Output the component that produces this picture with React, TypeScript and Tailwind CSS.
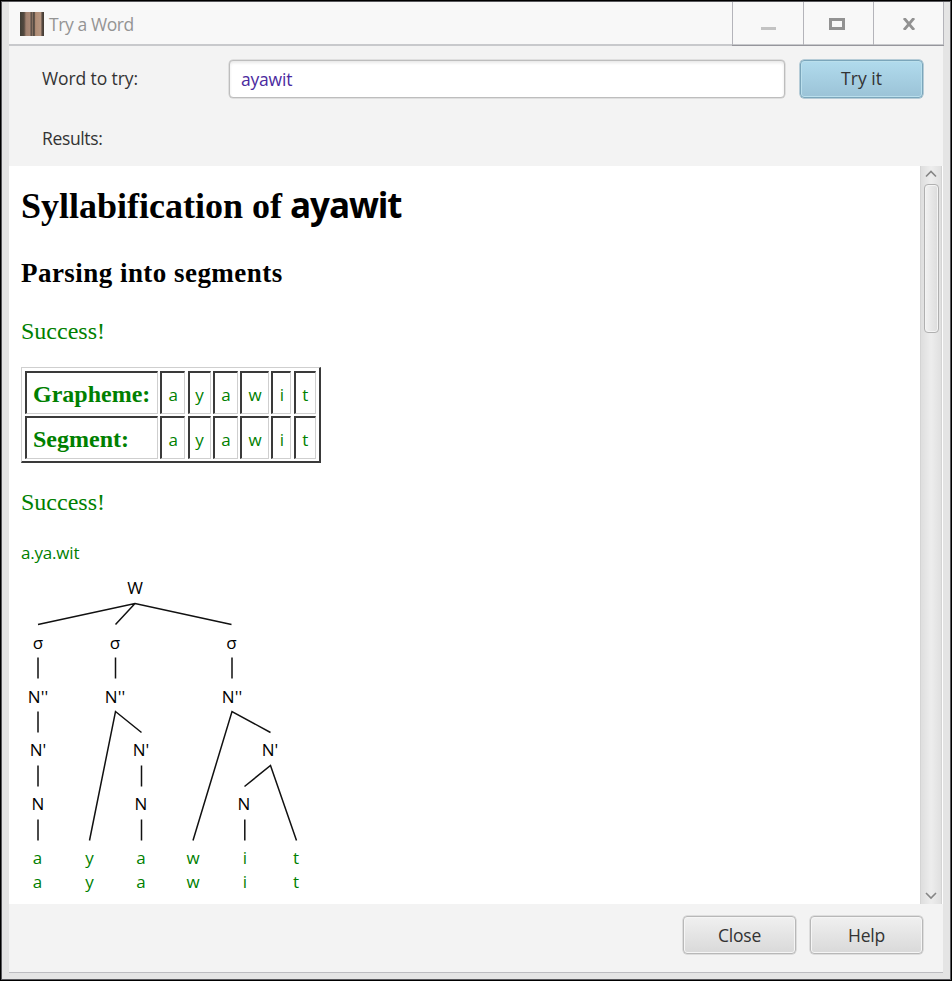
const LETTERS = ["a", "y", "a", "w", "i", "t"];
const ui = "font-['Open_Sans','Noto_Sans',sans-serif]";
const button =
  "h-[38px] w-[113px] rounded-[4px] border-[1.5px] border-[#b8b8b8] bg-linear-to-b from-[#f0f0f0] to-[#d9d9d9] pt-[1px] text-[17.5px] tracking-[-0.2px] text-[#333] shadow-[inset_0_0_0_1px_#f5f5f5,0_0_0_0.5px_#c8c8c8]";
const cell =
  "flex items-center justify-center border-t-2 border-l-2 border-r border-b border-t-[#3a3a3a] border-l-[#3a3a3a] border-r-[#cfcfcf] border-b-[#cfcfcf]";

function WindowBar() {
  return (
    <header className="flex h-[44px] shrink-0 border-b-2 border-[#c8c9cc] bg-[#f8f8f8]">
      <div className="flex grow items-center pt-[1px] pl-[11px]">
        <svg width="24" height="24" viewBox="0 0 24 24">
          <defs>
            <linearGradient id="wood" x1="0" y1="0" x2="1" y2="0">
              <stop offset="0" stopColor="#403e36" />
              <stop offset=".17" stopColor="#554a40" />
              <stop offset=".25" stopColor="#a08170" />
              <stop offset=".42" stopColor="#a98976" />
              <stop offset=".46" stopColor="#4e4540" />
              <stop offset=".53" stopColor="#8c7565" />
              <stop offset=".58" stopColor="#393632" />
              <stop offset=".65" stopColor="#b08d76" />
              <stop offset=".86" stopColor="#b59580" />
              <stop offset=".92" stopColor="#574a42" />
              <stop offset="1" stopColor="#403831" />
            </linearGradient>
          </defs>
          <rect width="24" height="24" fill="url(#wood)" />
        </svg>
        <span className="pt-[1px] pl-[5px] text-[17.5px] leading-[24px] tracking-[-0.4px] text-[#949494]">Try a Word</span>
      </div>
      <div className="-mr-px flex h-[44px] border-b border-[#96969c]">
        <div className="flex w-[71px] items-center justify-center border-l border-[#b4b4ba]">
          <svg width="16" height="16"><path d="M1 12.5h15" stroke="#c3c3c3" strokeWidth="3" /></svg>
        </div>
        <div className="flex w-[70px] items-center justify-center border-l border-[#b4b4ba] pr-[3px]">
          <svg width="16" height="12"><rect x="1.5" y="1.5" width="13" height="9" fill="none" stroke="#929292" strokeWidth="3" /></svg>
        </div>
        <div className="flex w-[71px] items-center justify-center border-x border-[#b4b4ba]">
          <svg width="14" height="12"><path d="M2 0l10 12M12 0L2 12" stroke="#929292" strokeWidth="2.8" /></svg>
        </div>
      </div>
    </header>
  );
}

function SegmentTable() {
  return (
    <div className="mt-[20px] grid h-[96px] w-[300px] grid-cols-[133px_25px_23px_25px_29px_20px_22px] grid-rows-[43px_43px] gap-x-[2.3px] gap-y-[2px] border-t border-l border-r-2 border-b-2 border-t-[#cfcfcf] border-l-[#cfcfcf] border-r-[#3a3a3a] border-b-[#3a3a3a] pt-[3px] pl-[3px] text-[#008000]">
      {["Grapheme:", "Segment:"].map((name) => [
        <div key={name} className={`${cell} justify-start! pt-[2px] pl-[6px] font-['Liberation_Serif',serif] text-[24px] font-bold`}>{name}</div>,
        ...LETTERS.map((l, i) => (
          <div key={name + i} className={`${cell} pt-[4px] text-[17px]`}>{l}</div>
        )),
      ])}
    </div>
  );
}

const NODES: [number, number, string][] = [
  [135, 593.5, "W"],
  [38, 649, "σ"], [115, 649, "σ"], [231.5, 649, "σ"],
  [38, 703, "N''"], [115, 703, "N''"], [232, 703, "N''"],
  [38, 756, "N'"], [141, 756, "N'"], [270, 756, "N'"],
  [38, 810, "N"], [141, 810, "N"], [244, 810, "N"],
];
const LEAF_X = [37.5, 89.5, 141, 193, 245, 296];

function SyllableTree() {
  return (
    <svg className="block font-['Open_Sans','Noto_Sans',sans-serif]" width="310" height="334" viewBox="9 570 310 334" textAnchor="middle" fontSize="17">
      <path
        d="M38 624.5L135 603.5L231.5 624.5M135 603.5L115.5 624.5M38 657.5V678.5M115.5 657.5V678.5M232 657.5V678.5M38 711.5V732.5M38 765.5V786.5M38 819.5V840.5M89.5 840.5L115.5 711.5L141.5 732.5M141.5 765.5V786.5M141.5 819.5V840.5M193 840.5L232 711.5L270.5 732.5M244.5 786.5L270.5 765.5L296.5 840.5M244.8 819.5V840.5"
        fill="none" stroke="#111" strokeWidth="1.5"
      />
      {NODES.map(([x, y, label]) => <text key={`${x}-${y}`} x={x} y={y} fill="#000">{label}</text>)}
      {LETTERS.map((l, i) => (
        <g key={i} fill="#008000">
          <text x={LEAF_X[i]} y="864">{l}</text>
          <text x={LEAF_X[i]} y="888">{l}</text>
        </g>
      ))}
    </svg>
  );
}

function Scrollbar() {
  return (
    <div className="flex w-[22px] flex-col items-center border-x border-[#d4d4d4] bg-linear-to-r from-[#dedede] via-[#ededed] to-[#e0e0e0]">
      <svg className="block shrink-0" width="12" height="18"><path d="M1 10.5L6 5.5L11 10.5" fill="none" stroke="#858585" strokeWidth="1.6" /></svg>
      <div className="h-[149px] w-[15px] shrink-0 rounded-[4px] border border-[#b0b0b0] bg-linear-to-r from-[#f2f2f2] to-[#dcdcdc] shadow-[inset_0_0_0_1px_#f4f4f4]" />
      <svg className="mt-auto block shrink-0" width="12" height="16"><path d="M1 5L6 10L11 5" fill="none" stroke="#858585" strokeWidth="1.6" /></svg>
    </div>
  );
}

export default function App() {
  return (
    <div className={`h-[981px] w-[952px] overflow-hidden border border-black bg-[#e4e4e4] ${ui}`}>
      <div className="h-full border border-[#58585c] px-[7px] pb-[6px]">
        <div className="flex h-full flex-col border-b border-[#bcbcc0] bg-[#f3f3f3]">
          <WindowBar />
          <main className="flex min-h-0 grow flex-col text-[17.5px]">
            <div className="flex h-[65px] shrink-0 items-center pr-[20px] pl-[33px] text-[#333]">
              <label htmlFor="word" className="w-[187px] tracking-[-0.1px]">Word to try:</label>
              <input id="word" defaultValue="ayawit" className="h-[38px] w-[556px] rounded-[4px] border-[1.5px] border-[#bdbdbd] bg-white px-[11px] tracking-[-0.2px] text-[#4b2ba0] shadow-[inset_0_2px_3px_#e9e9e9,0_0_0_0.5px_#cccccc] outline-none" />
              <button className="ml-[15px] h-[38px] w-[123px] rounded-[4px] border-[1.5px] border-[#7ba6bb] bg-linear-to-b from-[#b1dbed] to-[#9bc3d7] text-[#333] shadow-[inset_0_0_0_1px_#badfec,0_0_0_0.5px_#7ba6bb]">Try it</button>
            </div>
            <div className="flex h-[55px] shrink-0 items-center pl-[33px] tracking-[-0.35px] text-[#333]">Results:</div>
            <div className="flex h-[738px] shrink-0 bg-white pr-[1px]">
              <section className="grow">
                <div className="pl-[12px]">
                  <h1 className="mt-[18px] h-[42px] font-['Liberation_Serif',serif] text-[36px] leading-[42px] font-bold whitespace-nowrap">
                    Syllabification of <span className={`${ui} -ml-[1px] text-[35px] tracking-[-1.1px]`}>ayawit</span>
                  </h1>
                  <h2 className="mt-[30px] font-['Liberation_Serif',serif] text-[27px] leading-[34px] font-bold tracking-[0.46px]">Parsing into segments</h2>
                  <p className="mt-[25px] font-['Liberation_Serif',serif] text-[24px] leading-[32px] text-[#008000]">Success!</p>
                  <SegmentTable />
                  <p className="mt-[23px] font-['Liberation_Serif',serif] text-[24px] leading-[32px] text-[#008000]">Success!</p>
                  <p className="mt-[23px] h-[29px] text-[17px] leading-[24px] tracking-[-0.2px] text-[#008000]">a.ya.wit</p>
                </div>
                <SyllableTree />
              </section>
              <Scrollbar />
            </div>
            <footer className="flex justify-end gap-[14px] pt-[12px] pr-[20px]">
              <button className={button}>Close</button>
              <button className={button}>Help</button>
            </footer>
          </main>
        </div>
      </div>
    </div>
  );
}
